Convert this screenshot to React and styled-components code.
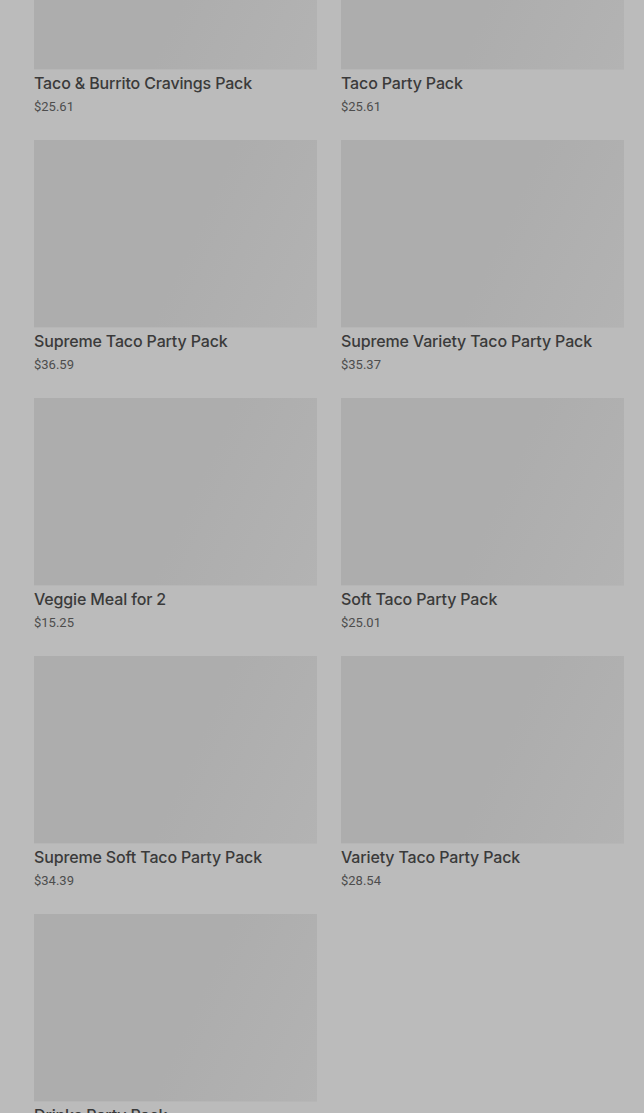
import React from "react";
import styled, { createGlobalStyle } from "styled-components";

const GlobalStyle = createGlobalStyle`
  body {
    margin: 0;
    background: #bbbbbb;
    font-family: Roboto, "Liberation Sans", sans-serif;
  }
`;

const Grid = styled.div`
  display: grid;
  grid-template-columns: 283px 283px;
  column-gap: 24px;
  row-gap: 24px;
  padding: 0 20px 40px 34px;
  margin-top: -118px;
`;

const Card = styled.div`
  display: flex;
  flex-direction: column;
`;

const Thumb = styled.div`
  height: 187px;
  background: linear-gradient(115deg, #adadad 0%, #adadad 55%, #b3b3b3 100%);
  border-bottom: 1px solid #b6b6b6;
`;

const Title = styled.p`
  margin: 2px 0 0;
  font-family: Inter, Roboto, "Liberation Sans", sans-serif;
  font-size: 16px;
  line-height: 22px;
  font-weight: 500;
  letter-spacing: -0.15px;
  color: #3a3a3a;
`;

const Price = styled.span`
  margin-top: 4px;
  font-size: 13px;
  line-height: 18px;
  color: #4d4d4d;
`;

const products = [
  { name: "Taco & Burrito Cravings Pack", price: "$25.61" },
  { name: "Taco Party Pack", price: "$25.61" },
  { name: "Supreme Taco Party Pack", price: "$36.59" },
  { name: "Supreme Variety Taco Party Pack", price: "$35.37" },
  { name: "Veggie Meal for 2", price: "$15.25" },
  { name: "Soft Taco Party Pack", price: "$25.01" },
  { name: "Supreme Soft Taco Party Pack", price: "$34.39" },
  { name: "Variety Taco Party Pack", price: "$28.54" },
  { name: "Drinks Party Pack", price: "$19.99" },
];

const App = () => {
  return (
    <>
      <GlobalStyle />
      <Grid>
        {products.map((p) => (
          <Card key={p.name}>
            <Thumb />
            <Title>{p.name}</Title>
            <Price>{p.price}</Price>
          </Card>
        ))}
      </Grid>
    </>
  );
};

export default App;
